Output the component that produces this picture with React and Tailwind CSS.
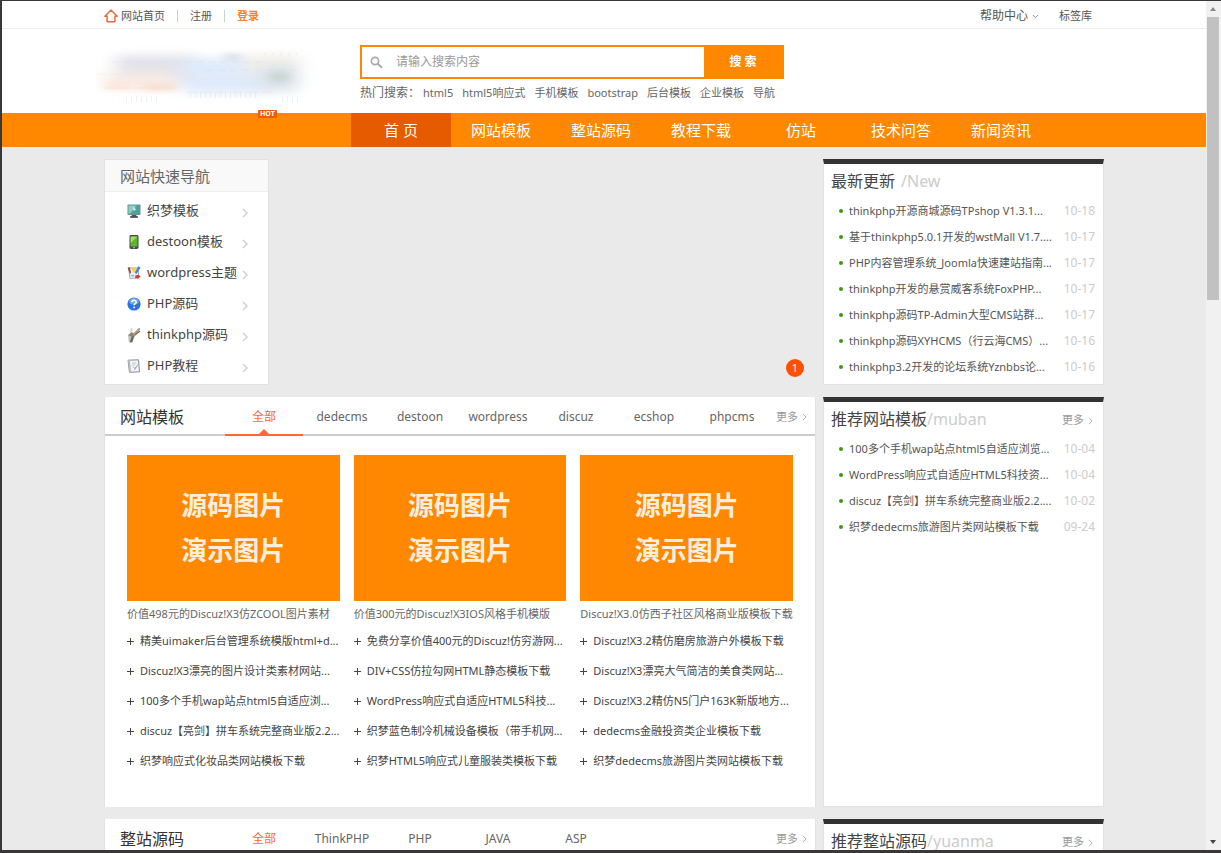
import { useState } from "react";

const hotWords = ["html5", "html5响应式", "手机模板", "bootstrap", "后台模板", "企业模板", "导航"];

const navItems = ["首 页", "网站模板", "整站源码", "教程下载", "仿站", "技术问答", "新闻资讯"];

const latest = [
  { title: "thinkphp开源商城源码TPshop V1.3.1...", date: "10-18" },
  { title: "基于thinkphp5.0.1开发的wstMall V1.7....", date: "10-17" },
  { title: "PHP内容管理系统_Joomla快速建站指南...", date: "10-17" },
  { title: "thinkphp开发的悬赏威客系统FoxPHP...", date: "10-17" },
  { title: "thinkphp源码TP-Admin大型CMS站群...", date: "10-17" },
  { title: "thinkphp源码XYHCMS（行云海CMS）...", date: "10-16" },
  { title: "thinkphp3.2开发的论坛系统Yznbbs论...", date: "10-16" },
];

const recommended = [
  { title: "100多个手机wap站点html5自适应浏览...", date: "10-04" },
  { title: "WordPress响应式自适应HTML5科技资...", date: "10-04" },
  { title: "discuz【亮剑】拼车系统完整商业版2.2....", date: "10-02" },
  { title: "织梦dedecms旅游图片类网站模板下载", date: "09-24" },
];

const columns = [
  {
    caption: "价值498元的Discuz!X3仿ZCOOL图片素材",
    items: [
      "精美uimaker后台管理系统模版html+d...",
      "Discuz!X3漂亮的图片设计类素材网站...",
      "100多个手机wap站点html5自适应浏...",
      "discuz【亮剑】拼车系统完整商业版2.2...",
      "织梦响应式化妆品类网站模板下载",
    ],
  },
  {
    caption: "价值300元的Discuz!X3IOS风格手机模版",
    items: [
      "免费分享价值400元的Discuz!仿穷游网...",
      "DIV+CSS仿拉勾网HTML静态模板下载",
      "WordPress响应式自适应HTML5科技...",
      "织梦蓝色制冷机械设备模板（带手机网...",
      "织梦HTML5响应式儿童服装类模板下载",
    ],
  },
  {
    caption: "Discuz!X3.0仿西子社区风格商业版模板下载",
    items: [
      "Discuz!X3.2精仿磨房旅游户外模板下载",
      "Discuz!X3漂亮大气简洁的美食类网站...",
      "Discuz!X3.2精仿N5门户163K新版地方...",
      "dedecms金融投资类企业模板下载",
      "织梦dedecms旅游图片类网站模板下载",
    ],
  },
];

const MonitorIcon = () => (
  <svg viewBox="0 0 14 14" className="size-[14px]">
    <rect x="0.5" y="0.5" width="13" height="10.5" rx="0.8" fill="#6d8f93" />
    <rect x="1.5" y="1.5" width="11" height="8.2" fill="#4fa39f" />
    <path d="M1.5 1.5h8L3 9.7H1.5z" fill="#8fcac4" />
    <path d="M6 2.5 9 5.5 6.5 7z" fill="#d5efec" />
    <path d="M5 11h4l1 1.5H4z" fill="#555" />
    <rect x="3" y="12.3" width="8" height="1.4" rx="0.6" fill="#333" />
  </svg>
);

const PhoneIcon = () => (
  <svg viewBox="0 0 14 14" className="size-[14px]">
    <rect x="2.5" y="0" width="9" height="14" rx="1.4" fill="#4a4a4a" />
    <rect x="3.6" y="1.6" width="6.8" height="10" fill="#5fb52b" />
    <path d="M3.6 1.6h6.8L3.6 8z" fill="#a6dc6e" />
    <rect x="6" y="12.2" width="2" height="1" fill="#bbb" />
  </svg>
);

const PaintIcon = () => (
  <svg viewBox="0 0 14 14" className="size-[14px]">
    <path d="M1.5 2h9l1 2v8L3 12.5z" fill="#eef3f8" stroke="#8b95a5" strokeWidth="0.8" />
    <path d="M.6 1.8 2.6 1l1.6 5.5L3 8z" fill="#a9483f" />
    <path d="M4.5 2.5 8 1l1.5 4.5-3 1.5z" fill="#f7cf45" />
    <path d="M11 0.3 13.6 1.6 9.6 8 7.8 7z" fill="#4a86cf" />
    <path d="M8.2 9.5 11.5 8.8l2.2 1.8-2.5 1.9-3-.6z" fill="#d4392b" />
    <path d="M3.6 8.8h3.6v1.8H4z" fill="#9fb3cd" />
  </svg>
);

const HelpIcon = () => (
  <svg viewBox="0 0 14 14" className="size-[14px]">
    <circle cx="7" cy="7" r="6.6" fill="#2a72dc" />
    <ellipse cx="7" cy="4.4" rx="5" ry="3.4" fill="#7fb0ee" opacity="0.8" />
    <path d="M4.8 5.2c.2-2.6 4.6-2.5 4.4.1-.1 1.3-2.1 1.4-2.1 3" fill="none" stroke="#fff" strokeWidth="1.5" />
    <circle cx="7.1" cy="10.4" r="0.9" fill="#fff" />
  </svg>
);

const ToolIcon = () => (
  <svg viewBox="0 0 14 16" className="h-4 w-[14px]">
    <path d="M1 8 4.6 5 8.4 8l-3 7.4-3.6-.2z" fill="#c4c0b9" />
    <path d="M2.8 15.2 5.2 8l1.8 1.2-1.8 6z" fill="#6b655f" />
    <path d="M1.2 8.2 4.8 5l3.6 3-3.4 1.8z" fill="#8a847d" />
    <path d="M6.8 7.5 12.8 1.4" stroke="#a89a86" strokeWidth="2" />
    <path d="M7.5 8.3 13 4" stroke="#6a625b" strokeWidth="1.2" />
    <path d="M3.6 5.4 5.2 1.2" stroke="#d8d2c8" strokeWidth="1.6" />
    <path d="M5.4 6.2 8.6 7l-1.2 2z" fill="#d28a3a" />
  </svg>
);

const NoteIcon = () => (
  <svg viewBox="0 0 14 14" className="size-[14px]">
    <path d="M1 1.2 11.5.8l1 12L2.5 13.3z" fill="#f5f5f7" stroke="#8c8c92" />
    <path d="M1 1.2 2.8 1l1.4 12-1.7.3z" fill="#b9b9bf" />
    <path d="M5 4h4.5M5.2 6h3M5.5 8.3h2" stroke="#b4b8c6" strokeWidth="0.8" />
    <path d="M12.8 2.8 8 10.5 7.2 11l.2-1.2z" fill="#6a78b4" />
  </svg>
);

const quickNav = [
  { label: "织梦模板", icon: MonitorIcon },
  { label: "destoon模板", icon: PhoneIcon },
  { label: "wordpress主题", icon: PaintIcon },
  { label: "PHP源码", icon: HelpIcon },
  { label: "thinkphp源码", icon: ToolIcon },
  { label: "PHP教程", icon: NoteIcon },
];

const Chevron = ({ className }) => (
  <svg viewBox="0 0 6 10" className={className} fill="none" stroke="currentColor">
    <path d="M1 1l4 4-4 4" />
  </svg>
);

const MoreLink = () => (
  <a href="#more" className="flex items-center gap-1 pt-[3px] text-[11px] text-[#999]">
    更多
    <Chevron className="h-2 w-[5px]" />
  </a>
);

// Soft smeared brand mark
const Logo = () => (
  <svg viewBox="0 0 220 62" className="h-[62px] w-[220px]" aria-hidden="true">
    <defs>
      <filter id="smear" x="-20%" y="-40%" width="140%" height="180%">
        <feGaussianBlur stdDeviation="9 5" />
      </filter>
      <filter id="soft" x="-20%" y="-60%" width="140%" height="220%">
        <feGaussianBlur stdDeviation="6 3" />
      </filter>
    </defs>
    <g filter="url(#smear)">
      <rect x="20" y="10" width="84" height="28" fill="#e3e2ea" />
      <rect x="86" y="14" width="96" height="34" fill="#dfeafa" />
      <rect x="150" y="10" width="54" height="20" fill="#f1efe9" />
      <rect x="8" y="28" width="70" height="16" fill="#f8ece6" />
      <rect x="164" y="20" width="38" height="26" fill="#dce4ea" />
    </g>
    <g filter="url(#soft)">
      <rect x="46" y="40" width="34" height="4" fill="#f5cfba" />
      <rect x="10" y="39" width="26" height="4" fill="#fadfcc" />
      <rect x="128" y="10" width="18" height="4" fill="#c7cbd6" />
      <rect x="174" y="28" width="18" height="8" fill="#c3d0ce" />
    </g>
    <g strokeWidth="1" opacity="0.35">
      <path d="M2 29h78M90 34h108" stroke="#f4e3b4" strokeDasharray="9 4" />
      <path d="M8 43h70M90 47h90" stroke="#f5cfb6" strokeDasharray="12 3" />
      <path d="M16 17h150M110 25h90" stroke="#cfd6ee" strokeDasharray="7 5" />
      <path d="M30 54h34M94 50h66M186 54h18" stroke="#bfe0ef" strokeWidth="6" strokeDasharray="1 4" />
      <path d="M168 9h40" stroke="#f2e8bd" strokeWidth="3" strokeDasharray="2 6" />
    </g>
  </svg>
);

const TopBar = () => (
  <div className="h-7 border-b border-[#eee] bg-white">
    <div className="mx-auto flex h-full max-w-[1000px] items-center justify-between pt-[3px] text-[11px] text-[#555]">
      <div className="flex items-center">
        <a href="#home" className="flex items-center gap-[3px]">
          <svg viewBox="0 0 14 14" className="size-[14px]" fill="none" stroke="#ee6a3c" strokeWidth="1.5" strokeLinejoin="round">
            <path d="M7 1 .9 7.2h2.2v5.6h7.8V7.2h2.2z" />
          </svg>
          网站首页
        </a>
        <span className="mx-3 h-3 w-px bg-[#ccc]"></span>
        <a href="#register">注册</a>
        <span className="mx-3 h-3 w-px bg-[#ccc]"></span>
        <a href="#login" className="font-bold text-[#f5841f]">登录</a>
      </div>
      <div className="flex items-center gap-5 pr-3">
        <button type="button" className="flex items-center gap-1 text-xs">
          帮助中心
          <svg viewBox="0 0 8 5" className="h-[5px] w-[7px]" fill="none" stroke="#777">
            <path d="M1 .8l3 3 3-3" />
          </svg>
        </button>
        <a href="#tags">标签库</a>
      </div>
    </div>
  </div>
);

const Header = () => (
  <header className="bg-white">
    <div className="mx-auto flex max-w-[1000px] pt-4 pb-[6px]">
      <div className="-ml-2 w-[264px] shrink-0">
        <Logo />
      </div>
      <div className="w-[424px]">
        <form className="flex h-[34px] border-2 border-[#ff8800]" onSubmit={(e) => e.preventDefault()}>
          <label htmlFor="keyword" className="flex w-[34px] items-center pl-2" aria-label="搜索">
            <svg viewBox="0 0 14 14" className="size-[13px]" fill="none" stroke="#aaa" strokeWidth="1.8">
              <circle cx="5.4" cy="5.4" r="3.9" />
              <path d="M8.3 8.3l4.7 4.5" strokeWidth="2.2" />
            </svg>
          </label>
          <input
            id="keyword"
            type="text"
            placeholder="请输入搜索内容"
            className="min-w-0 flex-1 text-xs text-[#555] outline-none placeholder:text-[#999]"
          />
          <button type="submit" className="w-[78px] bg-[#ff8800] text-xs font-bold text-white">
            搜 索
          </button>
        </form>
        <div className="flex h-7 items-center gap-[9px] text-[11px] whitespace-nowrap text-[#666]">
          <span className="-mr-[6px] text-xs">热门搜索：</span>
          {hotWords.map((word) => (
            <a key={word} href="#search">{word}</a>
          ))}
        </div>
      </div>
    </div>
  </header>
);

const MainNav = () => (
  <nav className="bg-[#ff8800]">
    <div className="relative mx-auto flex max-w-[1000px] pl-[247px]">
      <span className="absolute -top-[3px] left-[154px] rounded-[1px] bg-[#ee5a10] px-[2px] text-[7px] leading-[8px] font-bold text-white">
        HOT
      </span>
      {navItems.map((item, index) => (
        <a
          key={item}
          href="#nav"
          className={`w-[100px] text-center text-[15px] leading-[34px] text-white ${
            index === 0 ? "bg-[#e65a00]" : ""
          }`}
        >
          {item}
        </a>
      ))}
    </div>
  </nav>
);

const QuickNav = () => (
  <aside className="w-[165px] border border-[#e2e2e2] bg-white">
    <h2 className="h-8 border-b border-[#eee] bg-[#f9f9f9] pl-[15px] text-[15px] leading-8 text-[#666]">
      网站快速导航
    </h2>
    <ul className="pt-[3px]">
      {quickNav.map(({ label, icon: Icon }) => (
        <li key={label}>
          <a href="#quick" className="flex h-[31px] items-center pr-5 pl-[22px] text-[13px] text-[#444]">
            <Icon />
            <span className="ml-[6px] flex-1 whitespace-nowrap">{label}</span>
            <Chevron className="mt-1 h-[10px] w-[6px] stroke-[1.5] text-[#d0d0d0]" />
          </a>
        </li>
      ))}
    </ul>
  </aside>
);

const SidePanel = ({ title, sub, spaced, more, items = [] }) => (
  <section className="w-[281px] shrink-0 border border-t-[5px] border-[#e2e2e2] border-t-[#333] bg-white pb-1 pl-[7px]">
    <div className="flex h-[34px] items-center justify-between pr-[10px]">
      <h2 className="text-base whitespace-nowrap text-[#444]">
        {title}
        <span className={`text-[#ccc] ${spaced ? "ml-[6px]" : ""}`}>/{sub}</span>
      </h2>
      {more && <MoreLink />}
    </div>
    <ul>
      {items.map((item) => (
        <li key={item.title} className="flex h-[26px] items-center pr-2 pl-2 text-[11px] text-[#555]">
          <span className="size-1 rounded-full bg-[#3c9a0c]"></span>
          <a href="#item" className="ml-[6px] flex-1 whitespace-nowrap">{item.title}</a>
          <span className="text-xs text-[#ccc]">{item.date}</span>
        </li>
      ))}
    </ul>
  </section>
);

const TabPanel = ({ title, tabs, children }) => {
  const [active, setActive] = useState(tabs[0]);

  return (
    <section className="min-w-0 flex-1 border-x border-[#e2e2e2] bg-white">
      <div className="flex h-[39px] border-b-2 border-[#ccc]">
        <h2 className="w-[120px] pl-[15px] text-base leading-[40px] text-[#333]">{title}</h2>
        <div className="flex flex-1">
          {tabs.map((tab) => (
            <button
              key={tab}
              type="button"
              onClick={() => setActive(tab)}
              className={`relative h-[39px] w-[78px] border-b-2 pt-[3px] text-center text-xs ${
                active === tab ? "border-[#ff6633] text-[#ff6633]" : "border-transparent text-[#666]"
              }`}
            >
              {tab}
              {active === tab && (
                <svg viewBox="0 0 10 5" className="absolute bottom-0 left-1/2 h-[5px] w-[10px] -translate-x-1/2" fill="#ff6633">
                  <path d="M0 5l5-5 5 5z" />
                </svg>
              )}
            </button>
          ))}
        </div>
        <div className="flex items-center pr-2">
          <MoreLink />
        </div>
      </div>
      {children}
    </section>
  );
};

const TemplateGrid = () => (
  <div className="grid grid-cols-3 gap-[14px] px-[22px] pt-[19px] pb-[31px]">
    {columns.map((column) => (
      <div key={column.caption} className="min-w-0 whitespace-nowrap text-[11px] text-[#444]">
        <a href="#template" className="block">
          <div className="flex h-[146px] flex-col items-center justify-center bg-[#ff8800] text-[26px] leading-[45px] font-bold text-[#fdeedd]">
            <span>源码图片</span>
            <span>演示图片</span>
          </div>
          <p className="h-[25px] leading-[25px] text-[#666]">{column.caption}</p>
        </a>
        <ul>
          {column.items.map((item) => (
            <li key={item} className="flex h-[30px] items-center">
              <svg viewBox="0 0 7 7" className="mr-[6px] size-[7px]" stroke="#444">
                <path d="M0 3.5h7M3.5 0v7" />
              </svg>
              <a href="#template">{item}</a>
            </li>
          ))}
        </ul>
      </div>
    ))}
  </div>
);

const Scrollbar = () => (
  <div className="flex w-[15px] shrink-0 flex-col items-center bg-[#f1f1f1] pr-[2px] pl-px">
    <svg viewBox="0 0 12 16" className="h-4 w-3 shrink-0" fill="#8a8a8a">
      <path d="M3 10l3-4 3 4z" />
    </svg>
    <div className="h-1/3 w-full bg-[#c1c1c1]"></div>
    <svg viewBox="0 0 12 16" className="mt-auto h-4 w-3 shrink-0" fill="#444">
      <path d="M3 6l3 4 3-4z" />
    </svg>
  </div>
);

const App = () => {
  return (
    <div className="flex h-screen overflow-hidden border-t border-b-3 border-l-2 border-[#3a3738] bg-[#eaeaea] font-['Noto_Sans','Noto_Sans_CJK_SC',sans-serif]">
      <div className="min-w-0 flex-1 overflow-hidden">
        <TopBar />
        <Header />
        <MainNav />
        <main className="mx-auto flex max-w-[1000px] flex-col gap-3 pt-3">
          <div className="flex gap-[7px]">
            <div className="flex flex-1">
              <QuickNav />
              <div className="relative flex-1">
                <button
                  type="button"
                  className="absolute right-3 bottom-2 size-[18px] rounded-full bg-[#ff5000] text-[11px] leading-[18px] text-white"
                >
                  1
                </button>
              </div>
            </div>
            <SidePanel title="最新更新" sub="New" spaced items={latest} />
          </div>

          <div className="flex gap-[7px]">
            <TabPanel
              title="网站模板"
              tabs={["全部", "dedecms", "destoon", "wordpress", "discuz", "ecshop", "phpcms"]}
            >
              <TemplateGrid />
            </TabPanel>
            <SidePanel title="推荐网站模板" sub="muban" more items={recommended} />
          </div>

          <div className="flex gap-[7px]">
            <TabPanel title="整站源码" tabs={["全部", "ThinkPHP", "PHP", "JAVA", "ASP"]} />
            <SidePanel title="推荐整站源码" sub="yuanma" more />
          </div>
        </main>
      </div>
      <Scrollbar />
    </div>
  );
};

export default App;
